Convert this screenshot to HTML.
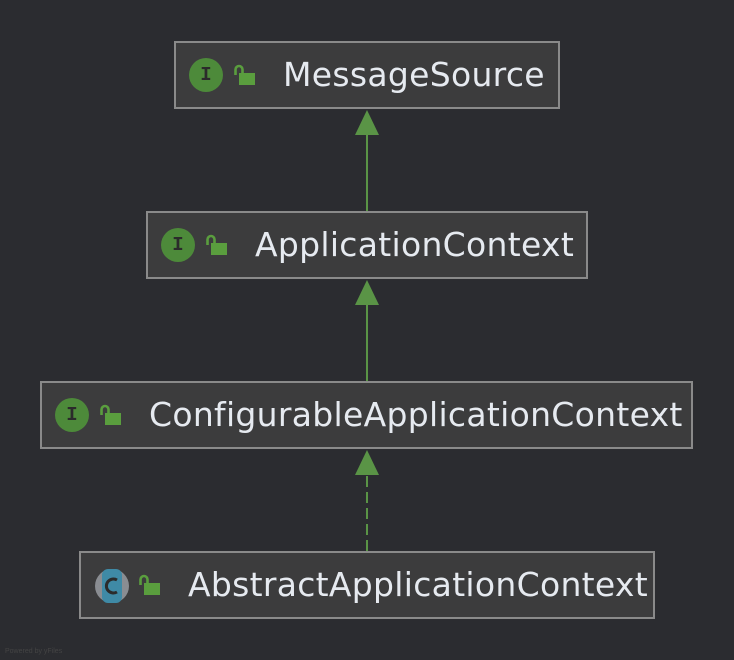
<!DOCTYPE html>
<html><head><meta charset="utf-8"><style>
html,body{margin:0;padding:0;}
body{width:734px;height:660px;background:#2b2c30;position:relative;overflow:hidden;font-family:"Liberation Sans","DejaVu Sans",sans-serif;}
.box{position:absolute;height:64px;background:#3c3c3d;border:2px solid #8a8a8a;box-sizing:content-box;}
.box .t{position:absolute;left:107px;top:0;line-height:64px;font-size:33px;letter-spacing:0.3px;font-family:"DejaVu Sans",sans-serif;color:#e6eaf0;white-space:nowrap;}
.ic{position:absolute;left:13px;top:15px;width:34px;height:34px;border-radius:50%;background:#4d8a3a;color:#2b2b2b;font:bold 19px "Liberation Mono",monospace;text-align:center;line-height:34px;}
.lock{position:absolute;left:57px;top:21px;}
svg.a{position:absolute;left:0;top:0;}
.pw{position:absolute;left:5px;top:648px;font-size:7px;color:#444;}
</style></head><body>
<svg class="a" width="734" height="660">
<g fill="#5a9446" stroke="#5a9446">
<polygon points="367,110 355,135 379,135" stroke="none"/>
<line x1="367" y1="134" x2="367" y2="211" stroke-width="2"/>
<polygon points="367,280 355,305 379,305" stroke="none"/>
<line x1="367" y1="304" x2="367" y2="381" stroke-width="2"/>
<polygon points="367,450 355,475 379,475" stroke="none"/>
<line x1="367" y1="476" x2="367" y2="551" stroke-width="2" stroke-dasharray="11,5"/>
</g></svg>

<div class="box" style="left:174px;top:41px;width:382px;">
<div class="ic">I</div>
<svg class="lock" width="24" height="22"><path d="M2.5 11V5.5a3.5 3.5 0 0 1 7 0V9" fill="none" stroke="#5a9e3e" stroke-width="2.6"/><rect x="6" y="9" width="16" height="12" fill="#5a9e3e"/></svg>
<div class="t">MessageSource</div></div>

<div class="box" style="left:146px;top:211px;width:438px;">
<div class="ic">I</div>
<svg class="lock" width="24" height="22"><path d="M2.5 11V5.5a3.5 3.5 0 0 1 7 0V9" fill="none" stroke="#5a9e3e" stroke-width="2.6"/><rect x="6" y="9" width="16" height="12" fill="#5a9e3e"/></svg>
<div class="t">ApplicationContext</div></div>

<div class="box" style="left:40px;top:381px;width:649px;">
<div class="ic">I</div>
<svg class="lock" width="24" height="22"><path d="M2.5 11V5.5a3.5 3.5 0 0 1 7 0V9" fill="none" stroke="#5a9e3e" stroke-width="2.6"/><rect x="6" y="9" width="16" height="12" fill="#5a9e3e"/></svg>
<div class="t">ConfigurableApplicationContext</div></div>

<div class="box" style="left:79px;top:551px;width:572px;">
<svg style="position:absolute;left:13px;top:15px" width="36" height="36"><circle cx="18" cy="18" r="17" fill="#8a8d92"/><rect x="8" y="1" width="20" height="34" rx="6" fill="#3f8aa6"/><path d="M23 12a7 7 0 1 0 0 12" fill="none" stroke="#2b2b2b" stroke-width="3"/></svg>
<svg class="lock" width="24" height="22"><path d="M2.5 11V5.5a3.5 3.5 0 0 1 7 0V9" fill="none" stroke="#5a9e3e" stroke-width="2.6"/><rect x="6" y="9" width="16" height="12" fill="#5a9e3e"/></svg>
<div class="t">AbstractApplicationContext</div></div>
<div class="pw">Powered by yFiles</div>
</body></html>
